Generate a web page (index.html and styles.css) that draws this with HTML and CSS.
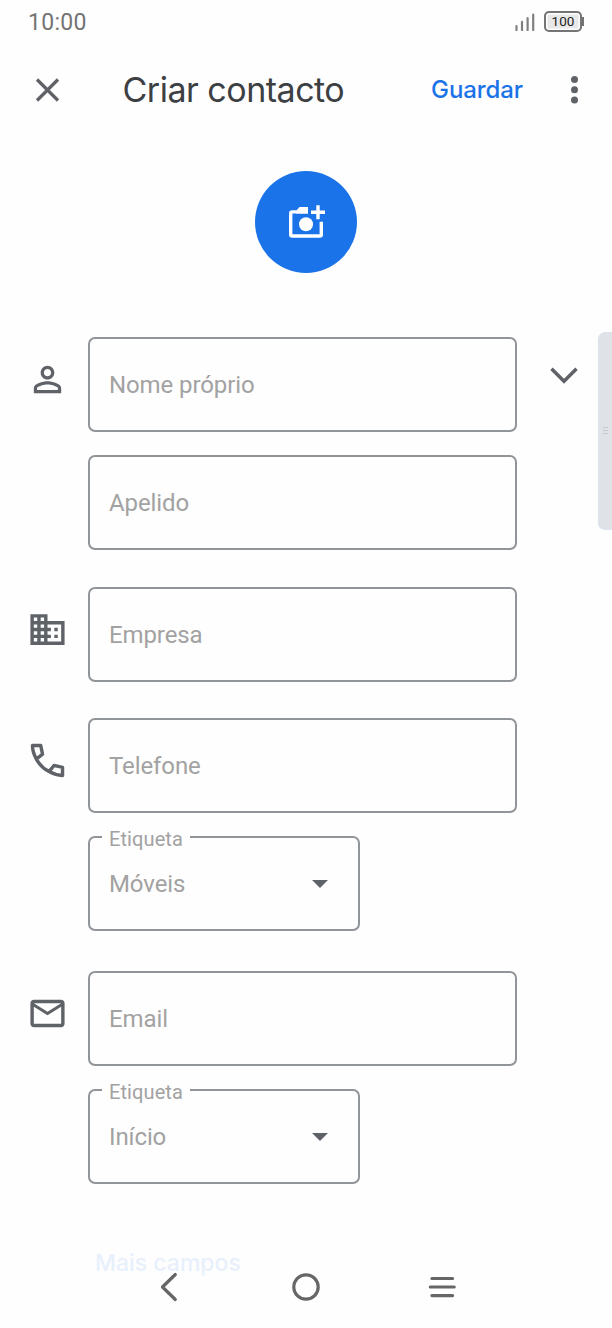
FILE: index.html
```html
<!DOCTYPE html>
<html lang="pt">
<head>
<title>Criar contacto</title>
<meta name="viewport" content="width=device-width, initial-scale=1.0" />
<meta charset="utf-8" />
<link rel="stylesheet" href="styles.css">
</head>
<body>

<div class="statusbar">
	<span class="clock">10:00</span>
	<svg class="signal" width="20" height="18" viewBox="0 0 20 18">
		<path d="M1.500 13v4M7 8.800v8.200M12.600 5.200v11.800M18.200 1.500v15.500" stroke="#808080" stroke-width="2.200" stroke-linecap="round" fill="none"/>
	</svg>
	<span class="battery">100</span>
</div>

<div class="toolbar">
	<svg class="close" width="26" height="26" viewBox="0 0 26 26">
		<path d="M3 2.500l21 21M24 2.500l-21 21" stroke="#5f6368" stroke-width="3.200" fill="none"/>
	</svg>
	<h1>Criar contacto</h1>
	<a class="save">Guardar</a>
	<svg class="more" width="8" height="30" viewBox="0 0 8 30">
		<g fill="#5f6368"><circle cx="3.500" cy="4.500" r="3.500"/><circle cx="3.500" cy="14.700" r="3.500"/><circle cx="3.500" cy="25" r="3.500"/></g>
	</svg>
</div>

<div class="photo">
	<svg width="40" height="40" viewBox="0 0 40 40">
		<path d="M22 9.900H6.200Q4.700 9.900 4.700 11.400V32.500Q4.700 34 6.200 34H33.800Q35.300 34 35.300 32.500V19.800" fill="none" stroke="#fff" stroke-width="3.400"/>
		<path d="M10 9l3.500-4H22v6.600H10z" fill="#fff"/>
		<path d="M32 3.200V17.200M25 10.200H39" stroke="#fff" stroke-width="3.400"/>
		<circle cx="20" cy="22.200" r="7" fill="#fff"/>
	</svg>
</div>

<div class="form">
	<div class="row">
		<svg class="icon" viewBox="0 0 24 24"><path d="M12 5.900c1.160 0 2.100.94 2.100 2.100s-.94 2.100-2.100 2.100S9.900 9.160 9.900 8s.94-2.100 2.100-2.100m0 9c2.970 0 6.100 1.460 6.100 2.100v1.100H5.900V17c0-.64 3.130-2.100 6.100-2.100M12 4C9.790 4 8 5.790 8 8s1.790 4 4 4 4-1.790 4-4-1.790-4-4-4zm0 9c-2.670 0-8 1.340-8 4v3h16v-3c0-2.660-5.330-4-8-4z"/></svg>
		<div class="fields">
			<div class="field"><span>Nome próprio</span></div>
			<div class="field"><span>Apelido</span></div>
		</div>
		<svg class="expand" width="28" height="18" viewBox="0 0 28 18">
			<path d="M1.500 1.800L14 14.300 26.500 1.800" fill="none" stroke="#5f6368" stroke-width="3.500"/>
		</svg>
	</div>

	<div class="row company">
		<svg class="icon" viewBox="0 0 24 24"><path d="M12 7V3H2v18h20V7H12zM6 19H4v-2h2v2zm0-4H4v-2h2v2zm0-4H4V9h2v2zm0-4H4V5h2v2zm4 12H8v-2h2v2zm0-4H8v-2h2v2zm0-4H8V9h2v2zm0-4H8V5h2v2zm10 12h-8v-2h2v-2h-2v-2h2v-2h-2V9h8v10zm-2-8h-2v2h2v-2zm0 4h-2v2h2v-2z"/></svg>
		<div class="fields">
			<div class="field"><span>Empresa</span></div>
		</div>
	</div>

	<div class="row phone">
		<svg class="icon stroked" viewBox="0 0 24 24"><path d="M3.200 3.200H8L9.100 8.300 5.500 11.200C4.100 8.600 3.200 5.700 3.200 3.200zM5.500 11.200C7.200 14.400 9.600 16.800 12.900 18.500M12.900 18.500L15.800 14.900 20.800 16V20.800C18.100 20.700 15.400 19.900 12.900 18.500z"/></svg>
		<div class="fields">
			<div class="field"><span>Telefone</span></div>
			<div class="field select">
				<label>Etiqueta</label>
				<span>Móveis</span>
				<i class="caret"></i>
			</div>
		</div>
	</div>

	<div class="row">
		<svg class="icon" viewBox="0 0 24 24"><path d="M20 4H4c-1.100 0-2 .9-2 2v12c0 1.100.9 2 2 2h16c1.100 0 2-.9 2-2V6c0-1.100-.9-2-2-2zm0 14H4V8l8 5 8-5v10zm-8-7L4 6h16l-8 5z"/></svg>
		<div class="fields">
			<div class="field"><span>Email</span></div>
			<div class="field select">
				<label>Etiqueta</label>
				<span>Início</span>
				<i class="caret"></i>
			</div>
		</div>
	</div>

	<a class="morefields">Mais campos</a>
</div>

<!-- drag handle of the edge panel -->
<div class="edge"><i></i><i></i><i></i></div>

<div class="navbar">
	<svg width="28" height="30" viewBox="0 0 28 30"><path d="M20.300 2.500L7.500 15l12.800 12.500" /></svg>
	<svg width="30" height="30" viewBox="0 0 30 30"><circle cx="16" cy="15" r="12.200"/></svg>
	<svg width="30" height="30" viewBox="0 0 30 30"><path d="M4.900 6.500h20.700M3.300 15h23.900M4.900 23.600h20.700"/></svg>
</div>

</body>
</html>
```

FILE: styles.css
```css
*{
	box-sizing:border-box;
}

body{
	margin:0;
	position:relative;
	width:612px;
	height:1328px;
	overflow:hidden;
	background-color:#fefefe;
	font-family:Roboto, "Liberation Sans", sans-serif;
}

.statusbar{
	display:flex;
	align-items:center;
	height:44px;
	padding:0 28px;
}

.clock{
	flex:1;
	font-size:23px;
	letter-spacing:0.3px;
	color:#747474;
}

.signal{
	margin:0 9px 0 0;
}

.battery{
	position:relative;
	width:38px;
	height:21px;
	margin:-2px 2px 0 0;
	border:2px solid #747474;
	border-radius:5px;
	background:#e8e8e8;
	box-shadow:inset 0 0 0 1.5px #fefefe;
	font-size:13.5px;
	line-height:17px;
	text-align:center;
	color:#222;
}

.battery::after{
	content:"";
	position:absolute;
	right:-4px;
	top:4px;
	width:2px;
	height:9px;
	background:#747474;
}

.toolbar{
	display:flex;
	align-items:center;
	height:92px;
	padding:0 33px 0 34px;
}

h1{
	flex:1;
	margin:-1px 0 0 62.5px;
	font-family:Inter, sans-serif;
	font-size:34px;
	font-weight:400;
	letter-spacing:-0.5px;
	color:#3c4043;
}

.save{
	margin:-2px 48px 0 0;
	font-family:Inter, sans-serif;
	font-size:24px;
	font-weight:500;
	letter-spacing:-0.1px;
	color:#1a73e8;
}

.photo{
	display:flex;
	align-items:center;
	justify-content:center;
	width:102px;
	height:102px;
	margin:35px auto 64px;
	border-radius:50%;
	background:#1a73e8;
}

.row{
	display:flex;
	align-items:flex-start;
	padding-left:27px;
	margin-bottom:37px;
}

.row.company{
	margin-bottom:36px;
}

.row.phone{
	margin-bottom:40px;
}

.icon{
	width:41px;
	height:41px;
	margin-top:21.5px;
	fill:#5f6368;
}

.icon.stroked{
	fill:none;
	stroke:#5f6368;
	stroke-width:2;
	stroke-linejoin:round;
}

.fields{
	display:flex;
	flex-direction:column;
	gap:23px;
	width:429px;
	margin-left:20px;
}

.field{
	position:relative;
	display:flex;
	align-items:center;
	height:95px;
	padding:0 19px;
	border:2px solid #919498;
	border-radius:7px;
	font-size:24px;
	letter-spacing:-0.1px;
	color:#a2a2a2;
}

.select{
	width:272px;
	justify-content:space-between;
}

.select label{
	position:absolute;
	left:12px;
	top:-11px;
	width:88px;
	padding-left:7px;
	background:#fefefe;
	font-size:20px;
	line-height:24px;
	letter-spacing:0.1px;
}

.caret{
	margin-right:11px;
	border:8.5px solid transparent;
	border-top-color:#5f6368;
	border-bottom:0;
}

.expand{
	margin:30px 0 0 33px;
}

.morefields{
	display:block;
	margin:65px 0 0 95px;
	font-family:Inter, sans-serif;
	font-size:23px;
	font-weight:500;
	color:#e8f0fc;
}

.edge{
	position:absolute;
	right:0;
	top:332px;
	width:14px;
	height:198px;
	padding-top:94px;
	border:1px solid #dce3ee;
	border-right:0;
	border-radius:7px 0 0 7px;
	background:#dfe2e7;
}

.edge i{
	display:block;
	width:5px;
	height:1px;
	margin:0 0 2px 4px;
	background:#c6cad0;
}

.navbar{
	position:absolute;
	left:0;
	right:0;
	bottom:0;
	display:flex;
	justify-content:space-between;
	height:56px;
	padding:0 155px;
}

.navbar svg{
	fill:none;
	stroke:#666;
	stroke-width:3.2;
	stroke-linecap:round;
	stroke-linejoin:round;
}
```
